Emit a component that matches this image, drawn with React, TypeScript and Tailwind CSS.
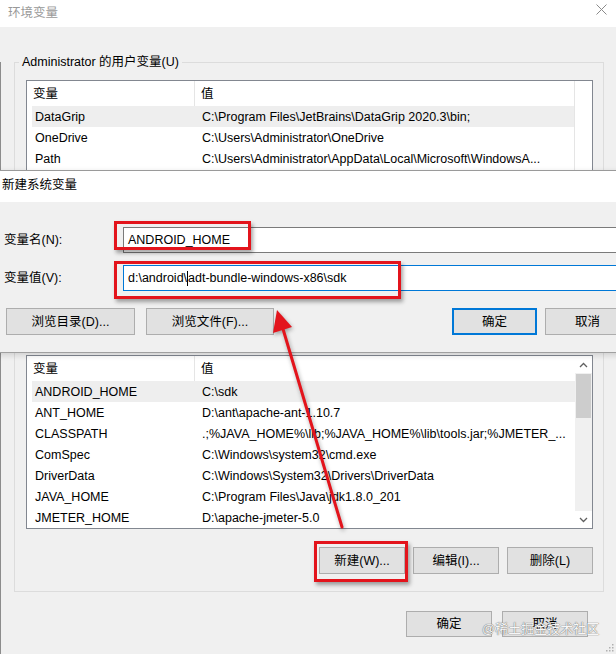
import React from 'react'

const userVars: [string, string][] = [
  ['DataGrip', 'C:\\Program Files\\JetBrains\\DataGrip 2020.3\\bin;'],
  ['OneDrive', 'C:\\Users\\Administrator\\OneDrive'],
  ['Path', 'C:\\Users\\Administrator\\AppData\\Local\\Microsoft\\WindowsA...'],
]

const sysVars: [string, string][] = [
  ['ANDROID_HOME', 'C:\\sdk'],
  ['ANT_HOME', 'D:\\ant\\apache-ant-1.10.7'],
  ['CLASSPATH', '.;%JAVA_HOME%\\lib;%JAVA_HOME%\\lib\\tools.jar;%JMETER_...'],
  ['ComSpec', 'C:\\Windows\\system32\\cmd.exe'],
  ['DriverData', 'C:\\Windows\\System32\\Drivers\\DriverData'],
  ['JAVA_HOME', 'C:\\Program Files\\Java\\jdk1.8.0_201'],
  ['JMETER_HOME', 'D:\\apache-jmeter-5.0'],
]

function Chevron({ down }: { down?: boolean }) {
  return (
    <svg width="9" height="6" viewBox="0 0 9 6" className="text-[#606060]">
      <path d={down ? 'M1 1 L4.5 4.5 L8 1' : 'M1 5 L4.5 1.5 L8 5'} fill="none" stroke="currentColor" strokeWidth="1.3" />
    </svg>
  )
}

function Button({ label, w, primary, className = '' }: { label: string; w: string; primary?: boolean; className?: string }) {
  return (
    <div
      className={`flex h-full shrink-0 items-center justify-center bg-[#e1e1e1] pt-[1px] ${w} ${
        primary ? 'border-2 border-[#0078d7]' : 'border border-[#adadad]'
      } ${className}`}
    >
      {label}
    </div>
  )
}

function VarList({ rows, scroll }: { rows: [string, string][]; scroll?: boolean }) {
  return (
    <div className="flex h-full border border-[#828790] bg-white">
      <div className="flex-1 overflow-hidden pl-[5px]">
        {/* Header */}
        <div className="flex h-[25px] items-center">
          <div className="flex h-full w-[163px] items-center border-r border-[#e5e5e5] pl-[1px] pt-[1px]">变量</div>
          <div className="pl-[6px] pt-[1px]">值</div>
        </div>
        {rows.map(([name, value], i) => (
          <div key={name} className={`flex h-[21px] items-center whitespace-nowrap pt-[2px] ${i === 0 ? 'bg-[#eeeeee]' : ''}`}>
            <div className="w-[163px] shrink-0 pl-[3px]">{name}</div>
            <div className="pl-[7px]">{value}</div>
          </div>
        ))}
      </div>
      {scroll ? (
        <div className="flex w-[17px] flex-col bg-[#f0f0f0]">
          <div className="flex h-[17px] items-center justify-center bg-white">
            <Chevron />
          </div>
          <div className="mx-[1px] mt-[1px] h-[44px] bg-[#cdcdcd]" />
          <div className="flex-1" />
          <div className="flex h-[17px] items-center justify-center bg-white">
            <Chevron down />
          </div>
        </div>
      ) : (
        <div className="w-[18px] border-l border-[#e5e5e5]" />
      )}
    </div>
  )
}

export default function App() {
  return (
    <div className="relative h-[654px] w-[616px] overflow-hidden bg-[#f0f0f0] text-[12.5px] text-black [font-family:'Liberation_Sans','Noto_Sans_CJK_SC',sans-serif]">
      {/* Background window: 环境变量 */}
      <div className="flex h-[27px] items-start justify-between bg-white pl-[8px] pr-[9px] pt-[5px] leading-[16px] text-[#999999]">
        <span>环境变量</span>
        <svg width="11" height="11" viewBox="0 0 11 11" className="mt-[-1px]">
          <path d="M0.5 0.5 L10.5 10.5 M10.5 0.5 L0.5 10.5" stroke="#8a8a8a" strokeWidth="1" />
        </svg>
      </div>

      <div className="h-[627px] border-l border-[#8c8c8c]">
        {/* User variables */}
        <div className="ml-[13px] mt-[35px] h-[250px] w-[590px] border border-[#dcdcdc]">
          <div className="-mt-[9px] ml-[4px] w-fit bg-[#f0f0f0] px-[3px] leading-[17px]">Administrator 的用户变量(U)</div>
          <div className="ml-[11px] mt-[9px] h-[178px] w-[567px]">
            <VarList rows={userVars} />
          </div>
          <div className="mt-[18px] flex h-[27px] justify-end gap-[8px] pr-[10px]">
            <Button label="新建(N)..." w="w-[86px]" />
            <Button label="编辑(E)..." w="w-[86px]" />
            <Button label="删除(D)" w="w-[86px]" />
          </div>
        </div>

        {/* System variables */}
        <div className="ml-[13px] mt-[24px] w-[590px] border border-[#dcdcdc] pb-[17px]">
          <div className="-mt-[9px] ml-[4px] w-fit bg-[#f0f0f0] px-[3px] leading-[17px]">系统变量(S)</div>
          <div className="ml-[11px] mt-[10px] h-[174px] w-[567px]">
            <VarList rows={sysVars} scroll />
          </div>
          <div className="mt-[18px] flex h-[27px] justify-end gap-[8px] pr-[10px]">
            <Button label="新建(W)..." w="w-[86px]" />
            <Button label="编辑(I)..." w="w-[86px]" />
            <Button label="删除(L)" w="w-[86px]" />
          </div>
        </div>

        <div className="mt-[19px] flex h-[26px] justify-end gap-[10px] pr-[28px]">
          <Button label="确定" w="w-[86px]" />
          <Button label="取消" w="w-[86px]" />
        </div>
      </div>

      {/* Foreground dialog: 新建系统变量 */}
      <div className="absolute left-[-8px] top-[170px] w-[660px] border-y border-t-[#9a9a9a] border-b-[#a0a0a0] shadow-[0_2px_6px_rgba(0,0,0,0.15)]">
        <div className="flex h-[31px] items-center bg-white pb-[2px] pl-[10px]">新建系统变量</div>
        <div className="bg-[#f0f0f0] pb-[17px] pl-[12px] pt-[25px]">
          <div className="flex h-[26px] items-center">
            <div className="w-[119px] pt-[1px]">变量名(N):</div>
            <div className="flex h-full flex-1 items-center border border-[#7a7a7a] bg-white pl-[4px] pt-[1px]">ANDROID_HOME</div>
          </div>
          <div className="mt-[12px] flex h-[26px] items-center">
            <div className="w-[119px] pt-[1px]">变量值(V):</div>
            <div className="flex h-full flex-1 items-center whitespace-nowrap border border-[#0078d7] bg-white pl-[4px] pt-[1px]">
              <span>d:\android\</span>
              <span className="h-[15px] w-px bg-black" />
              <span>adt-bundle-windows-x86\sdk</span>
            </div>
          </div>
          <div className="mt-[17px] flex h-[27px]">
            <Button label="浏览目录(D)..." w="w-[129px]" className="ml-[2px]" />
            <Button label="浏览文件(F)..." w="w-[128px]" className="ml-[11px]" />
            <Button label="确定" w="w-[85px]" primary className="ml-[178px]" />
            <Button label="取消" w="w-[85px]" className="ml-[8px]" />
          </div>
        </div>
      </div>

      {/* Red annotations */}
      <div className="absolute left-[114px] top-[221px] h-[29px] w-[137px] border-[3px] border-[#e3141c] shadow-[2px_3px_4px_rgba(0,0,0,0.35)]" />
      <div className="absolute left-[114px] top-[261px] h-[38px] w-[287px] border-[3px] border-[#e3141c] shadow-[2px_3px_4px_rgba(0,0,0,0.35)]" />
      <div className="absolute left-[314px] top-[541px] h-[41px] w-[94px] border-[3px] border-[#e3141c] shadow-[2px_3px_4px_rgba(0,0,0,0.35)]" />

      <svg
        width="616"
        height="654"
        viewBox="0 0 616 654"
        className="pointer-events-none absolute left-0 top-0 drop-shadow-[1px_2px_2px_rgba(0,0,0,0.35)]"
      >
        <line x1="342" y1="527" x2="283" y2="329" stroke="#e3141c" strokeWidth="3" strokeLinecap="round" />
        <polygon points="277,310 292,327 273,333" fill="#e3141c" />
      </svg>

      {/* Watermark */}
      <div className="absolute left-[482px] top-[620px] text-[13px] leading-[18px] text-[#f6f6f6] [text-shadow:0_0_1px_#707070,0_0_1px_#707070]">
        @稀土掘金技术社区
      </div>

      {/* Resize grip */}
      <svg width="8" height="8" viewBox="0 0 8 8" className="absolute bottom-[2px] right-[2px]">
        <rect x="6" y="0" width="1.5" height="1.5" fill="#b0b0b0" />
        <rect x="3" y="3" width="1.5" height="1.5" fill="#b0b0b0" />
        <rect x="6" y="3" width="1.5" height="1.5" fill="#b0b0b0" />
        <rect x="0" y="6" width="1.5" height="1.5" fill="#b0b0b0" />
        <rect x="3" y="6" width="1.5" height="1.5" fill="#b0b0b0" />
        <rect x="6" y="6" width="1.5" height="1.5" fill="#b0b0b0" />
      </svg>
    </div>
  )
}
